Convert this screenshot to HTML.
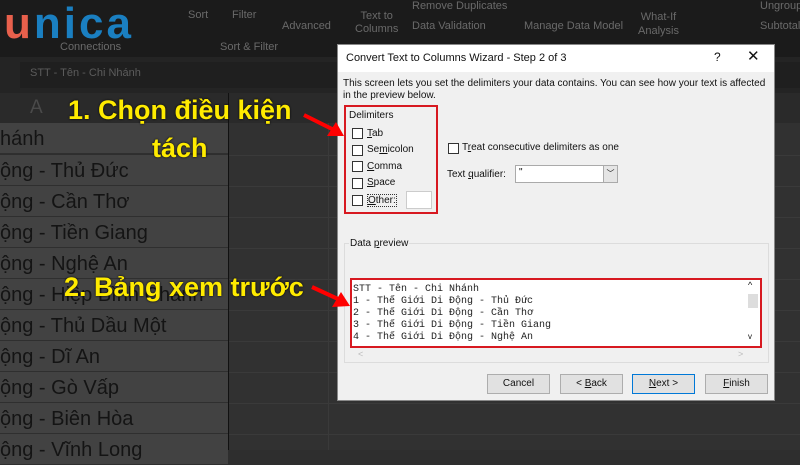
<!DOCTYPE html>
<html><head><meta charset="utf-8"><style>
*{margin:0;padding:0;box-sizing:border-box}
body{width:800px;height:450px;overflow:hidden;background:#2e2e2e;position:relative;font-family:"Liberation Sans","DejaVu Sans",sans-serif}
.a{position:absolute}
.rb{color:#6a6a6a;font-size:11px}
.cell{position:absolute;left:0;width:228px;height:31px;border-bottom:1px solid #2f2f2f;background:#424242;color:#141414;font-size:20px;line-height:33px;white-space:nowrap;overflow:hidden}
.gl{position:absolute;left:229px;width:571px;height:1px;background:#3a3a3a}
.dlg{font-family:"Liberation Sans","DejaVu Sans",sans-serif;font-size:10px;color:#111}
.cb{position:absolute;width:11px;height:11px;border:1px solid #333;background:#fff}
.btn{position:absolute;top:374px;width:63px;height:20px;background:#e1e1e1;border:1px solid #adadad;font-size:10px;text-align:center;line-height:18px}
.yel{position:absolute;color:#ffeb00;font-weight:bold;font-size:27px;white-space:nowrap;text-shadow:0 0 2px #000}
.mono{font-family:"Liberation Mono","DejaVu Sans Mono",monospace;font-size:10px;line-height:12px;white-space:pre;color:#222}
</style></head><body>
<div class="a" style="left:0;top:0;width:800px;height:57px;background:#1b1b1b"></div>
<div class="a" style="left:4px;top:2px;font-size:44px;font-weight:bold;letter-spacing:3px;line-height:44px"><span style="color:#e8604c">u</span><span style="color:#1a7fc1">nica</span></div>
<div class="a rb" style="left:60px;top:41px">Connections</div>
<div class="a rb" style="left:188px;top:9px">Sort</div>
<div class="a rb" style="left:232px;top:9px">Filter</div>
<div class="a rb" style="left:282px;top:20px">Advanced</div>
<div class="a rb" style="left:220px;top:41px">Sort &amp; Filter</div>
<div class="a rb" style="left:355px;top:10px;line-height:13px;text-align:center">Text to<br>Columns</div>
<div class="a rb" style="left:412px;top:0px">Remove Duplicates</div>
<div class="a rb" style="left:412px;top:20px">Data Validation</div>
<div class="a rb" style="left:524px;top:20px">Manage Data Model</div>
<div class="a rb" style="left:638px;top:10px;line-height:14px;text-align:center">What-If<br>Analysis</div>
<div class="a rb" style="left:760px;top:0px">Ungroup</div>
<div class="a rb" style="left:760px;top:20px">Subtotal</div>
<div class="a" style="left:0;top:57px;width:800px;height:36px;background:#242424"></div>
<div class="a" style="left:20px;top:62px;width:780px;height:26px;background:#1f1f1f"></div>
<div class="a" style="left:30px;top:67px;color:#5c5c5c;font-size:11px">STT - Tên - Chi Nhánh</div>
<div class="a" style="left:0;top:93px;width:800px;height:30px;background:#2a2a2a"></div>
<div class="a" style="left:30px;top:97px;color:#4a4a4a;font-size:19px">A</div>
<div class="a" style="left:228px;top:93px;width:1px;height:357px;background:#111"></div>
<div class="cell" style="top:123px">hánh</div>
<div class="cell" style="top:155px">ộng - Thủ Đức</div>
<div class="cell" style="top:186px">ộng - Cần Thơ</div>
<div class="cell" style="top:217px">ộng - Tiền Giang</div>
<div class="cell" style="top:248px">ộng - Nghệ An</div>
<div class="cell" style="top:279px">ộng - Hiệp Bình Chánh</div>
<div class="cell" style="top:310px">ộng - Thủ Dầu Một</div>
<div class="cell" style="top:341px">ộng - Dĩ An</div>
<div class="cell" style="top:372px">ộng - Gò Vấp</div>
<div class="cell" style="top:403px">ộng - Biên Hòa</div>
<div class="cell" style="top:434px">ộng - Vĩnh Long</div>
<div class="a" style="left:229px;top:123px;width:571px;height:327px;background:#313131"></div>
<div class="gl" style="top:155px"></div><div class="gl" style="top:186px"></div><div class="gl" style="top:217px"></div><div class="gl" style="top:248px"></div><div class="gl" style="top:279px"></div><div class="gl" style="top:310px"></div><div class="gl" style="top:341px"></div><div class="gl" style="top:372px"></div><div class="gl" style="top:403px"></div><div class="gl" style="top:434px"></div>
<div class="a" style="left:328px;top:123px;width:1px;height:327px;background:#3a3a3a"></div>
<div class="a dlg" style="left:337px;top:44px;width:438px;height:357px;background:#f0f0f0;border:1px solid #888">
 <div class="a" style="left:0;top:0;width:436px;height:27px;background:#fff"></div>
 <div class="a" style="left:8px;top:7px;font-size:11px">Convert Text to Columns Wizard - Step 2 of 3</div>
 <div class="a" style="left:376px;top:5px;font-size:12px">?</div>
 <div class="a" style="left:409px;top:2px;font-size:15px">✕</div>
 <div class="a" style="left:5px;top:33px;line-height:12px;width:430px">This screen lets you set the delimiters your data contains.  You can see how your text is affected in the preview below.</div>
 <div class="a" style="left:6px;top:60px;width:94px;height:109px;border:2px solid #d71920"></div>
 <div class="a" style="left:11px;top:65px">Delimiters</div>
 <div class="cb" style="left:14px;top:83px"></div><div class="a" style="left:29px;top:83px"><u>T</u>ab</div>
 <div class="cb" style="left:14px;top:100px"></div><div class="a" style="left:29px;top:99px">Se<u>m</u>icolon</div>
 <div class="cb" style="left:14px;top:116px"></div><div class="a" style="left:29px;top:116px"><u>C</u>omma</div>
 <div class="cb" style="left:14px;top:133px"></div><div class="a" style="left:29px;top:132px"><u>S</u>pace</div>
 <div class="cb" style="left:14px;top:150px"></div><div class="a" style="left:29px;top:149px;border:1px dotted #333"><u>O</u>ther:</div>
 <div class="a" style="left:68px;top:146px;width:26px;height:18px;background:#fff;border:1px solid #ccc"></div>
 <div class="cb" style="left:110px;top:98px"></div><div class="a" style="left:124px;top:97px">T<u>r</u>eat consecutive delimiters as one</div>
 <div class="a" style="left:109px;top:124px">Text <u>q</u>ualifier:</div>
 <div class="a" style="left:177px;top:120px;width:103px;height:18px;background:#fff;border:1px solid #aaa"><span style="position:absolute;left:3px;top:1px">"</span><span style="position:absolute;right:0;top:0;width:14px;height:16px;background:#e5e5e5;border-left:1px solid #aaa;text-align:center;font-size:8px;line-height:16px">﹀</span></div>
 <div class="a" style="left:6px;top:198px;width:425px;height:120px;border:1px solid #dcdcdc"></div>
 <div class="a" style="left:11px;top:193px;background:#f0f0f0;padding:0 1px">Data <u>p</u>review</div>
 <div class="a" style="left:12px;top:233px;width:412px;height:70px;border:2px solid #d71920;background:#fff"></div>
 <div class="a mono" style="left:15px;top:239px">STT - Tên - Chi Nhánh
1 - Thế Giới Di Động - Thủ Đức
2 - Thế Giới Di Động - Cần Thơ
3 - Thế Giới Di Động - Tiền Giang
4 - Thế Giới Di Động - Nghệ An</div>
 <div class="a" style="left:410px;top:249px;width:10px;height:14px;background:#ddd"></div>
 <div class="a" style="left:410px;top:235px;font-size:9px">^</div>
 <div class="a" style="left:410px;top:287px;font-size:8px">v</div>
 <div class="a" style="left:20px;top:304px;color:#bbb;font-size:9px">&lt;</div>
 <div class="a" style="left:400px;top:304px;color:#bbb;font-size:9px">&gt;</div>
</div>
<div class="btn dlg" style="left:487px">Cancel</div>
<div class="btn dlg" style="left:560px">&lt; <u>B</u>ack</div>
<div class="btn dlg" style="left:632px;border:1px solid #0078d7"><u>N</u>ext &gt;</div>
<div class="btn dlg" style="left:705px"><u>F</u>inish</div>
<div class="yel" style="left:68px;top:95px">1. Chọn điều kiện</div>
<div class="yel" style="left:152px;top:133px">tách</div>
<div class="yel" style="left:64px;top:272px">2. Bảng xem trước</div>
<svg class="a" style="left:300px;top:110px" width="50" height="30"><line x1="4" y1="5" x2="34" y2="20" stroke="#f00" stroke-width="4"/><polygon points="44,26 27,26 36,12" fill="#f00"/></svg>
<svg class="a" style="left:308px;top:282px" width="44" height="30"><line x1="4" y1="5" x2="30" y2="17" stroke="#f00" stroke-width="4"/><polygon points="42,24 24,25 33,10" fill="#f00"/></svg>
</body></html>
